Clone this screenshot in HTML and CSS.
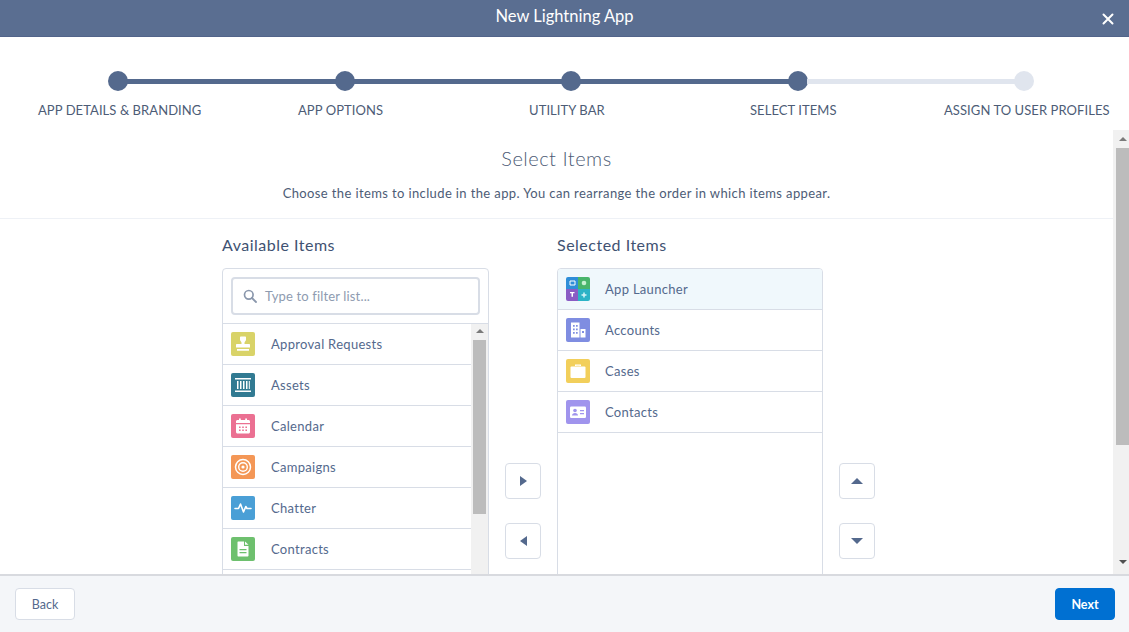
FILE: index.html
```html
<!DOCTYPE html>
<html lang="en">
<head>
    <meta charset="UTF-8">
    <title>New Lightning App</title>
    <link rel="stylesheet" href="styles.css">
</head>
<body>

    <div class="modal">
        <header class="modal-header">
            <h1>New Lightning App</h1>
            <button class="close-btn" aria-label="Close">
                <svg width="12" height="12" viewBox="0 0 12 12"><path d="M1.500 1.500l9 9M10.500 1.500l-9 9" stroke="#fff" stroke-width="2" stroke-linecap="round"/></svg>
            </button>
        </header>

        <div class="progress">
            <div class="track">
                <span class="dot done"></span>
                <span class="line done"></span>
                <span class="dot done"></span>
                <span class="line done"></span>
                <span class="dot done"></span>
                <span class="line done"></span>
                <span class="dot done"></span>
                <span class="line"></span>
                <span class="dot"></span>
            </div>
            <div class="step-labels">
                <span>APP DETAILS &amp; BRANDING</span>
                <span>APP OPTIONS</span>
                <span>UTILITY BAR</span>
                <span>SELECT ITEMS</span>
                <span>ASSIGN TO USER PROFILES</span>
            </div>
        </div>

        <div class="scroll-area">
            <main class="content">
                <div class="intro">
                    <h2>Select Items</h2>
                    <p>Choose the items to include in the app. You can rearrange the order in which items appear.</p>
                </div>

                <div class="picker">
                    <section class="picker-col">
                        <h3>Available Items</h3>
                        <div class="box">
                            <div class="filter">
                                <div class="filter-input">
                                    <svg width="14" height="14" viewBox="0 0 14 14"><circle cx="5.800" cy="5.800" r="4.300" fill="none" stroke="#8a97ac" stroke-width="1.700"/><path d="M9 9l4 4" stroke="#8a97ac" stroke-width="1.800" stroke-linecap="round"/></svg>
                                    <span>Type to filter list...</span>
                                </div>
                            </div>
                            <div class="list-wrap">
                                <ul class="rows">
                                    <li class="row">
                                        <span class="icon approval"><svg viewBox="0 0 24 24"><path d="M9 5.500c0-.6.500-1 1-1h4c.6 0 1 .4 1 1v2.500c0 .8-1.500 1.500-1.500 2.700V12H18c.6 0 1 .4 1 1v2.500H5V13c0-.6.400-1 1-1h4.500v-1.300C10.500 9.500 9 8.800 9 8z" fill="#fff"/><path d="M6 17h12v1.800H6z" fill="#fff"/></svg></span>
                                        Approval Requests
                                    </li>
                                    <li class="row">
                                        <span class="icon assets"><svg viewBox="0 0 24 24"><path d="M4 5h16v1.500H4zM4 17.500h16V19H4z" fill="#fff"/><path d="M6 8h1.500v8H6zM9 8h1.500v8H9zM12 8h1.500v8H12zM15 8h1.500v8H15zM17.800 8h1v8h-1z" fill="#fff"/></svg></span>
                                        Assets
                                    </li>
                                    <li class="row">
                                        <span class="icon calendar"><svg viewBox="0 0 24 24"><path d="M5 7.500C5 6.600 5.700 6 6.500 6H8V4.500h1.800V6h4.400V4.500H16V6h1.500c.8 0 1.500.6 1.500 1.500V9H5z" fill="#fff"/><path d="M5 10.200h14V18c0 .8-.7 1.500-1.500 1.500h-11C5.700 19.500 5 18.800 5 18z" fill="#fff"/><path d="M8 12.500h1.600v1.500H8zM11.200 12.500h1.600v1.500h-1.600zM14.400 12.500H16v1.500h-1.600zM8 15.500h1.600V17H8zM11.200 15.500h1.600V17h-1.600zM14.400 15.500H16V17h-1.600z" fill="#eb7092"/></svg></span>
                                        Calendar
                                    </li>
                                    <li class="row">
                                        <span class="icon campaigns"><svg viewBox="0 0 24 24"><circle cx="12" cy="12" r="7.500" fill="none" stroke="#fff" stroke-width="1.500"/><circle cx="12" cy="12" r="4.300" fill="none" stroke="#fff" stroke-width="1.400"/><circle cx="12" cy="12" r="1.600" fill="#fff"/></svg></span>
                                        Campaigns
                                    </li>
                                    <li class="row">
                                        <span class="icon chatter"><svg viewBox="0 0 24 24"><path d="M4 12.500h3.500l2-4.500 3 8 2.300-5.500 1.200 2H20" fill="none" stroke="#fff" stroke-width="1.600" stroke-linecap="round" stroke-linejoin="round"/></svg></span>
                                        Chatter
                                    </li>
                                    <li class="row">
                                        <span class="icon contracts"><svg viewBox="0 0 24 24"><path d="M7 4.500h6v4.500h4.500v9.500c0 .6-.5 1-1 1H7.500c-.6 0-1-.4-1-1V5z" fill="#fff"/><path d="M14 4.500l3.500 3.300H14z" fill="#fff"/><path d="M8.500 12h7v1.300h-7zM8.500 15h7v1.300h-7z" fill="#6ec06e"/></svg></span>
                                        Contracts
                                    </li>
                                </ul>
                                <div class="scrollbar inner">
                                    <span class="arrow up"></span>
                                    <span class="thumb"></span>
                                </div>
                            </div>
                        </div>
                    </section>

                    <div class="movers">
                        <button class="icon-btn"><span class="tri right"></span></button>
                        <button class="icon-btn"><span class="tri left"></span></button>
                    </div>

                    <section class="picker-col selected-col">
                        <h3>Selected Items</h3>
                        <div class="box">
                            <ul class="rows">
                                <li class="row current">
                                    <span class="icon launcher"><svg viewBox="0 0 24 24"><path d="M0 0h12v12H0z" fill="#2f8ed8"/><path d="M12 0h12v12H12z" fill="#49b56b"/><path d="M0 12h12v12H0z" fill="#8a5cc4"/><path d="M12 12h12v12H12z" fill="#2cb3c6"/><path d="M4 4h5v4H4z" fill="none" stroke="#fff"/><circle cx="18" cy="6" r="2.300" fill="#c6f0d0"/><path d="M4 15h4.500v1.300H7v3.500H5.500v-3.500H4z" fill="#fff"/><path d="M18 15.500v5M15.500 18h5" stroke="#d5f4f8" stroke-width="1.500"/></svg></span>
                                    App Launcher
                                </li>
                                <li class="row">
                                    <span class="icon accounts"><svg viewBox="0 0 24 24"><path d="M5 4.500h8.500V19.500H5z" fill="#fff"/><path d="M7 7h1.700v1.700H7zM10 7h1.700v1.700H10zM7 10.500h1.700v1.700H7zM10 10.500h1.700v1.700H10zM7 14h1.700v1.700H7zM10 14h1.700v1.700H10z" fill="#7f8de1"/><path d="M14.500 11H19.500V19.500H14.500z" fill="#fff"/><path d="M16 13h2v2h-2z" fill="#7f8de1"/></svg></span>
                                    Accounts
                                </li>
                                <li class="row">
                                    <span class="icon cases"><svg viewBox="0 0 24 24"><path d="M9 7V5.500h6V7h-1.300v-.3h-3.400V7z" fill="#fff"/><rect x="4.500" y="7.500" width="15" height="11.500" rx="1" fill="#fff"/></svg></span>
                                    Cases
                                </li>
                                <li class="row">
                                    <span class="icon contacts"><svg viewBox="0 0 24 24"><rect x="4" y="6.500" width="16" height="11.500" rx="1.200" fill="#fff"/><circle cx="9" cy="10.500" r="1.800" fill="#a094ed"/><path d="M6 15.500c0-1.800 1.300-2.600 3-2.600s3 .8 3 2.600z" fill="#a094ed"/><path d="M14 10h4v1.300h-4zM14 13h4v1.300h-4z" fill="#a094ed"/></svg></span>
                                    Contacts
                                </li>
                            </ul>
                        </div>
                    </section>

                    <div class="movers">
                        <button class="icon-btn"><span class="tri up"></span></button>
                        <button class="icon-btn"><span class="tri down"></span></button>
                    </div>
                </div>
            </main>

            <div class="scrollbar outer">
                <span class="arrow up"></span>
                <span class="thumb"></span>
                <span class="arrow down"></span>
            </div>
        </div>

        <footer class="modal-footer">
            <button class="btn back">Back</button>
            <button class="btn next">Next</button>
        </footer>
    </div>

</body>
</html>
```

FILE: styles.css
```css
* {
    box-sizing: border-box;
}

body {
    margin: 0;
    font-family: Lato, "Open Sans", sans-serif;
    color: #54698d;
    background: #fff;
}

h1, h2, h3, p, ul {
    margin: 0;
    padding: 0;
    font-weight: 400;
}

ul {
    list-style: none;
}

button {
    font-family: inherit;
    cursor: pointer;
}

.modal {
    display: flex;
    flex-direction: column;
    width: 1129px;
    height: 632px;
    overflow: hidden;
}

/* header */
.modal-header {
    display: flex;
    align-items: center;
    justify-content: center;
    position: relative;
    flex: none;
    height: 37px;
    background: #5a6e91;
    border-bottom: 1px solid #52648a;
}

.modal-header h1 {
    font-size: 16.5px;
    color: #fff;
    margin-top: -5px;
}

.close-btn {
    position: absolute;
    top: 13px;
    right: 15px;
    display: flex;
    padding: 0;
    border: 0;
    background: none;
}

/* progress steps */
.progress {
    flex: none;
    height: 93px;
}

.track {
    display: flex;
    align-items: center;
    height: 20px;
    margin: 34px 95px 0 108px;
}

.dot {
    flex: none;
    width: 20px;
    height: 20px;
    border-radius: 50%;
    background: #e0e5ee;
}

.dot.done {
    background: #54698d;
}

.line {
    flex: 1;
    height: 5px;
    margin: 0 -1px;
    background: #e0e5ee;
}

.line.done {
    background: #54698d;
}

.step-labels {
    display: grid;
    grid-template-columns: 260px 231px 221px 194px 1fr;
    padding-left: 38px;
    margin-top: 10px;
    font-size: 13px;
    letter-spacing: .07px;
    line-height: 18px;
    color: #4d5c76;
    white-space: nowrap;
}

/* scrolling body */
.scroll-area {
    display: flex;
    flex: 1;
    min-height: 0;
}

.content {
    flex: 1;
    min-width: 0;
    overflow: hidden;
}

.intro {
    height: 89px;
    padding-top: 15px;
    text-align: center;
    border-bottom: 1px solid #eef1f6;
}

.intro h2 {
    font-size: 20px;
    font-weight: 300;
    letter-spacing: .5px;
    line-height: 26px;
    color: #4d5c76;
}

.intro p {
    margin-top: 13px;
    font-size: 13px;
    letter-spacing: .38px;
    line-height: 18px;
    color: #4d5c76;
}

.picker {
    display: grid;
    grid-template-columns: 267px 36px 266px 36px;
    column-gap: 16px;
    padding: 16px 0 0 222px;
}

.picker-col h3 {
    font-size: 16px;
    letter-spacing: .5px;
    line-height: 20px;
    color: #3f5272;
    margin-bottom: 13px;
}

.box {
    height: 360px;
    border: 1px solid #d8dde6;
    border-radius: 4px;
    overflow: hidden;
}

.filter {
    height: 55px;
    padding: 8px 8px 0 8px;
    border-bottom: 1px solid #d8dde6;
}

.filter-input {
    display: flex;
    align-items: center;
    gap: 8px;
    height: 38px;
    padding-left: 10px;
    font-size: 13px;
    letter-spacing: .15px;
    color: #8e9bb0;
    border: 2px solid #d8dde6;
    border-radius: 4px;
}

.list-wrap {
    display: flex;
    height: 305px;
}

.rows {
    flex: 1;
    min-width: 0;
}

.row {
    display: flex;
    align-items: center;
    height: 41px;
    padding-left: 8px;
    font-size: 13px;
    letter-spacing: .3px;
    color: #54698d;
    border-bottom: 1px solid #d8dde6;
}

.row.current {
    background: #f0f8fc;
}

.icon {
    flex: none;
    width: 24px;
    height: 24px;
    margin-right: 16px;
    border-radius: 2px;
    overflow: hidden;
}

.icon svg {
    display: block;
    width: 24px;
    height: 24px;
}

.approval { background: #d9d368; }
.assets { background: #317a92; }
.calendar { background: #eb7092; }
.campaigns { background: #f49756; }
.chatter { background: #4a9fd6; }
.contracts { background: #6ec06e; }
.accounts { background: #7f8de1; }
.cases { background: #f2cf5b; }
.contacts { background: #a094ed; }

.selected-col .icon {
    margin-right: 15px;
}

/* arrow buttons between the lists */
.movers {
    display: flex;
    flex-direction: column;
    gap: 24px;
    padding-top: 228px;
}

.icon-btn {
    display: flex;
    align-items: center;
    justify-content: center;
    width: 36px;
    height: 36px;
    padding: 0;
    background: #fff;
    border: 1px solid #d8dde6;
    border-radius: 4px;
}

.tri {
    width: 0;
    height: 0;
    border-style: solid;
}

.tri.right {
    border-width: 5px 0 5px 7px;
    border-color: transparent transparent transparent #54698d;
}

.tri.left {
    border-width: 5px 7px 5px 0;
    border-color: transparent #54698d transparent transparent;
}

.tri.up {
    border-width: 0 6px 6px;
    border-color: transparent transparent #54698d;
}

.tri.down {
    border-width: 6px 6px 0;
    border-color: #54698d transparent transparent;
}

/* scrollbars */
.scrollbar {
    display: flex;
    flex-direction: column;
    align-items: center;
    flex: none;
    background: #f1f1f1;
}

.scrollbar .thumb {
    background: #bcbcbc;
}

.arrow {
    width: 0;
    height: 0;
    border-style: solid;
}

.arrow.up {
    border-width: 0 4px 4px;
    border-color: transparent transparent #7a7a7a;
}

.arrow.down {
    border-width: 4px 4px 0;
    border-color: #505050 transparent transparent;
}

.scrollbar.outer {
    width: 16px;
    padding: 7px 0 7px 3px;
}

.scrollbar.outer .thumb {
    width: 13px;
    height: 297px;
    margin-top: 7px;
    margin-bottom: 115px;
}

.scrollbar.inner {
    width: 17px;
    padding-top: 5px;
}

.scrollbar.inner .thumb {
    width: 13px;
    height: 174px;
    margin-top: 7px;
}

/* footer */
.modal-footer {
    display: flex;
    align-items: flex-start;
    justify-content: space-between;
    flex: none;
    height: 58px;
    padding: 12px 14px 0 15px;
    background: #f4f6f9;
    border-top: 2px solid #d8dadf;
}

.btn {
    width: 60px;
    height: 32px;
    padding: 0;
    font-size: 12.5px;
    border-radius: 4px;
}

.back {
    color: #54698d;
    background: #fff;
    border: 1px solid #d8dde6;
}

.next {
    font-weight: 700;
    color: #fff;
    background: #0070d2;
    border: 1px solid #0070d2;
}
```
